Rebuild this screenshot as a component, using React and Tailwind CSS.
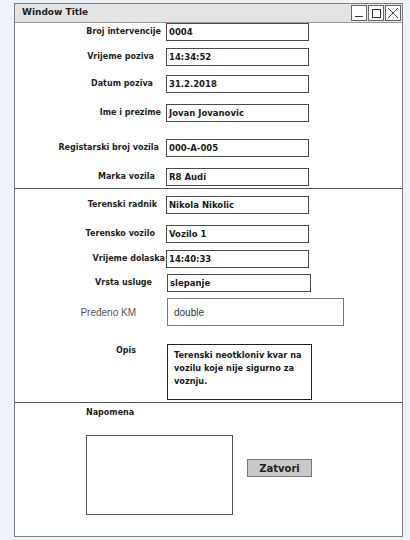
import React from 'react';

const topRows = [
    { label: 'Broj intervencije', value: '0004', mt: 'mt-[0px]', pr: 'pr-[5px]' },
    { label: 'Vrijeme poziva', value: '14:34:52', mt: 'mt-[7px]', pr: 'pr-[12px]' },
    { label: 'Datum poziva', value: '31.2.2018', mt: 'mt-[9px]', pr: 'pr-[13px]' },
    { label: 'Ime i prezime', value: 'Jovan Jovanovic', mt: 'mt-[11px]', pr: 'pr-[5px]' },
    { label: 'Registarski broj vozila', value: '000-A-005', mt: 'mt-[17px]', pr: 'pr-[7px]' },
    { label: 'Marka vozila', value: 'R8 Audi', mt: 'mt-[11px]', pr: 'pr-[11px]' },
];

const fieldRows = [
    { label: 'Terenski radnik', value: 'Nikola Nikolic', mt: 'mt-[7px]', pr: 'pr-[9px]', w: 'w-[143px]' },
    { label: 'Terensko vozilo', value: 'Vozilo 1', mt: 'mt-[11px]', pr: 'pr-[11px]', w: 'w-[143px]' },
    { label: 'Vrijeme dolaska', value: '14:40:33', mt: 'mt-[7px]', pr: 'pr-[1px]', w: 'w-[143px]' },
    { label: 'Vrsta usluge', value: 'slepanje', mt: 'mt-[6px]', pr: 'pr-[14px]', w: 'w-[144px] ml-[1px]' },
];

function Row({ label, value, mt, pr, w = 'w-[143px]' }) {
    return (
        <div className={`flex items-center h-[18px] ${mt}`}>
            <div className={`w-[151px] shrink-0 text-right text-[8px] font-bold text-[#1e1e1e] leading-none ${pr}`}>
                {label}
            </div>
            <div className={`${w} h-[18px] border border-[#4a4a4a] bg-white flex items-center px-[2px] text-[8.5px] font-bold text-[#1a1a1a]`}>
                {value}
            </div>
        </div>
    );
}

export default function App() {
    return (
        <div className="w-[410px] h-[540px] bg-[#eef2f9] pt-[3px] pl-[14px]" style={{ fontFamily: '"DejaVu Sans", sans-serif' }}>
            <div className="w-[389px] h-[534px] border border-[#7d7d7d] bg-white flex flex-col">
                {/* title bar */}
                <div className="h-[19px] shrink-0 bg-[#e3e3e3] border-b border-[#9a9a9a] flex items-center justify-between pl-[7px] pr-[1px]">
                    <span className="text-[9px] font-bold text-[#222]">Window Title</span>
                    <div className="flex gap-[1px]">
                        <div className="w-[16px] h-[16px] border border-[#666] bg-white flex items-end justify-center pb-[3px]">
                            <div className="w-[8px] h-[1px] bg-[#333]" />
                        </div>
                        <div className="w-[16px] h-[16px] border border-[#666] bg-white flex items-center justify-center">
                            <div className="w-[9px] h-[9px] border border-[#333]" />
                        </div>
                        <div className="w-[16px] h-[16px] border border-[#666] bg-white flex items-center justify-center">
                            <svg width="12" height="12" viewBox="0 0 12 12">
                                <path d="M1 1 L11 11 M11 1 L1 11" stroke="#444" strokeWidth="1" fill="none" />
                            </svg>
                        </div>
                    </div>
                </div>

                {/* first section */}
                <div className="h-[166px] shrink-0 border-b border-[#555] pt-[0px]">
                    {topRows.map(r => (
                        <Row key={r.label} {...r} />
                    ))}
                </div>

                {/* second section */}
                <div className="h-[214px] shrink-0 border-b border-[#555]">
                    {fieldRows.map(r => (
                        <Row key={r.label} {...r} />
                    ))}
                    <div className="flex items-center h-[28px] mt-[6px]">
                        <div className="w-[152px] shrink-0 text-right pr-[31px] text-[10px] text-[#555]" style={{ fontFamily: '"Liberation Sans", sans-serif' }}>
                            Pređeno KM
                        </div>
                        <div className="w-[177px] h-[28px] border border-[#777] bg-white flex items-center px-[6px] text-[10px] text-[#333]" style={{ fontFamily: '"Liberation Sans", sans-serif' }}>
                            double
                        </div>
                    </div>
                    <div className="flex mt-[18px]">
                        <div className="w-[152px] shrink-0 text-right pr-[31px] pt-[1px] text-[8px] font-bold text-[#1e1e1e]">
                            Opis
                        </div>
                        <div className="w-[145px] h-[56px] border border-[#222] bg-white pl-[6px] pr-[2px] pt-[4px] text-[8.2px] font-bold leading-[13px] text-[#1a1a1a]">
                            Terenski neotkloniv kvar na vozilu koje nije sigurno za voznju.
                        </div>
                    </div>
                </div>

                {/* napomena */}
                <div className="flex-1 pl-[71px] pt-[4px]">
                    <div className="text-[8px] font-bold text-[#1e1e1e]">Napomena</div>
                    <div className="flex items-start mt-[16px]">
                        <div className="w-[147px] h-[80px] border border-[#555] bg-white" />
                        <button className="ml-[14px] mt-[24px] w-[65px] h-[18px] bg-[#c9c9c9] border border-[#7a7a7a] text-[10px] font-bold text-[#222] flex items-center justify-center">
                            Zatvori
                        </button>
                    </div>
                </div>
            </div>
        </div>
    );
}
